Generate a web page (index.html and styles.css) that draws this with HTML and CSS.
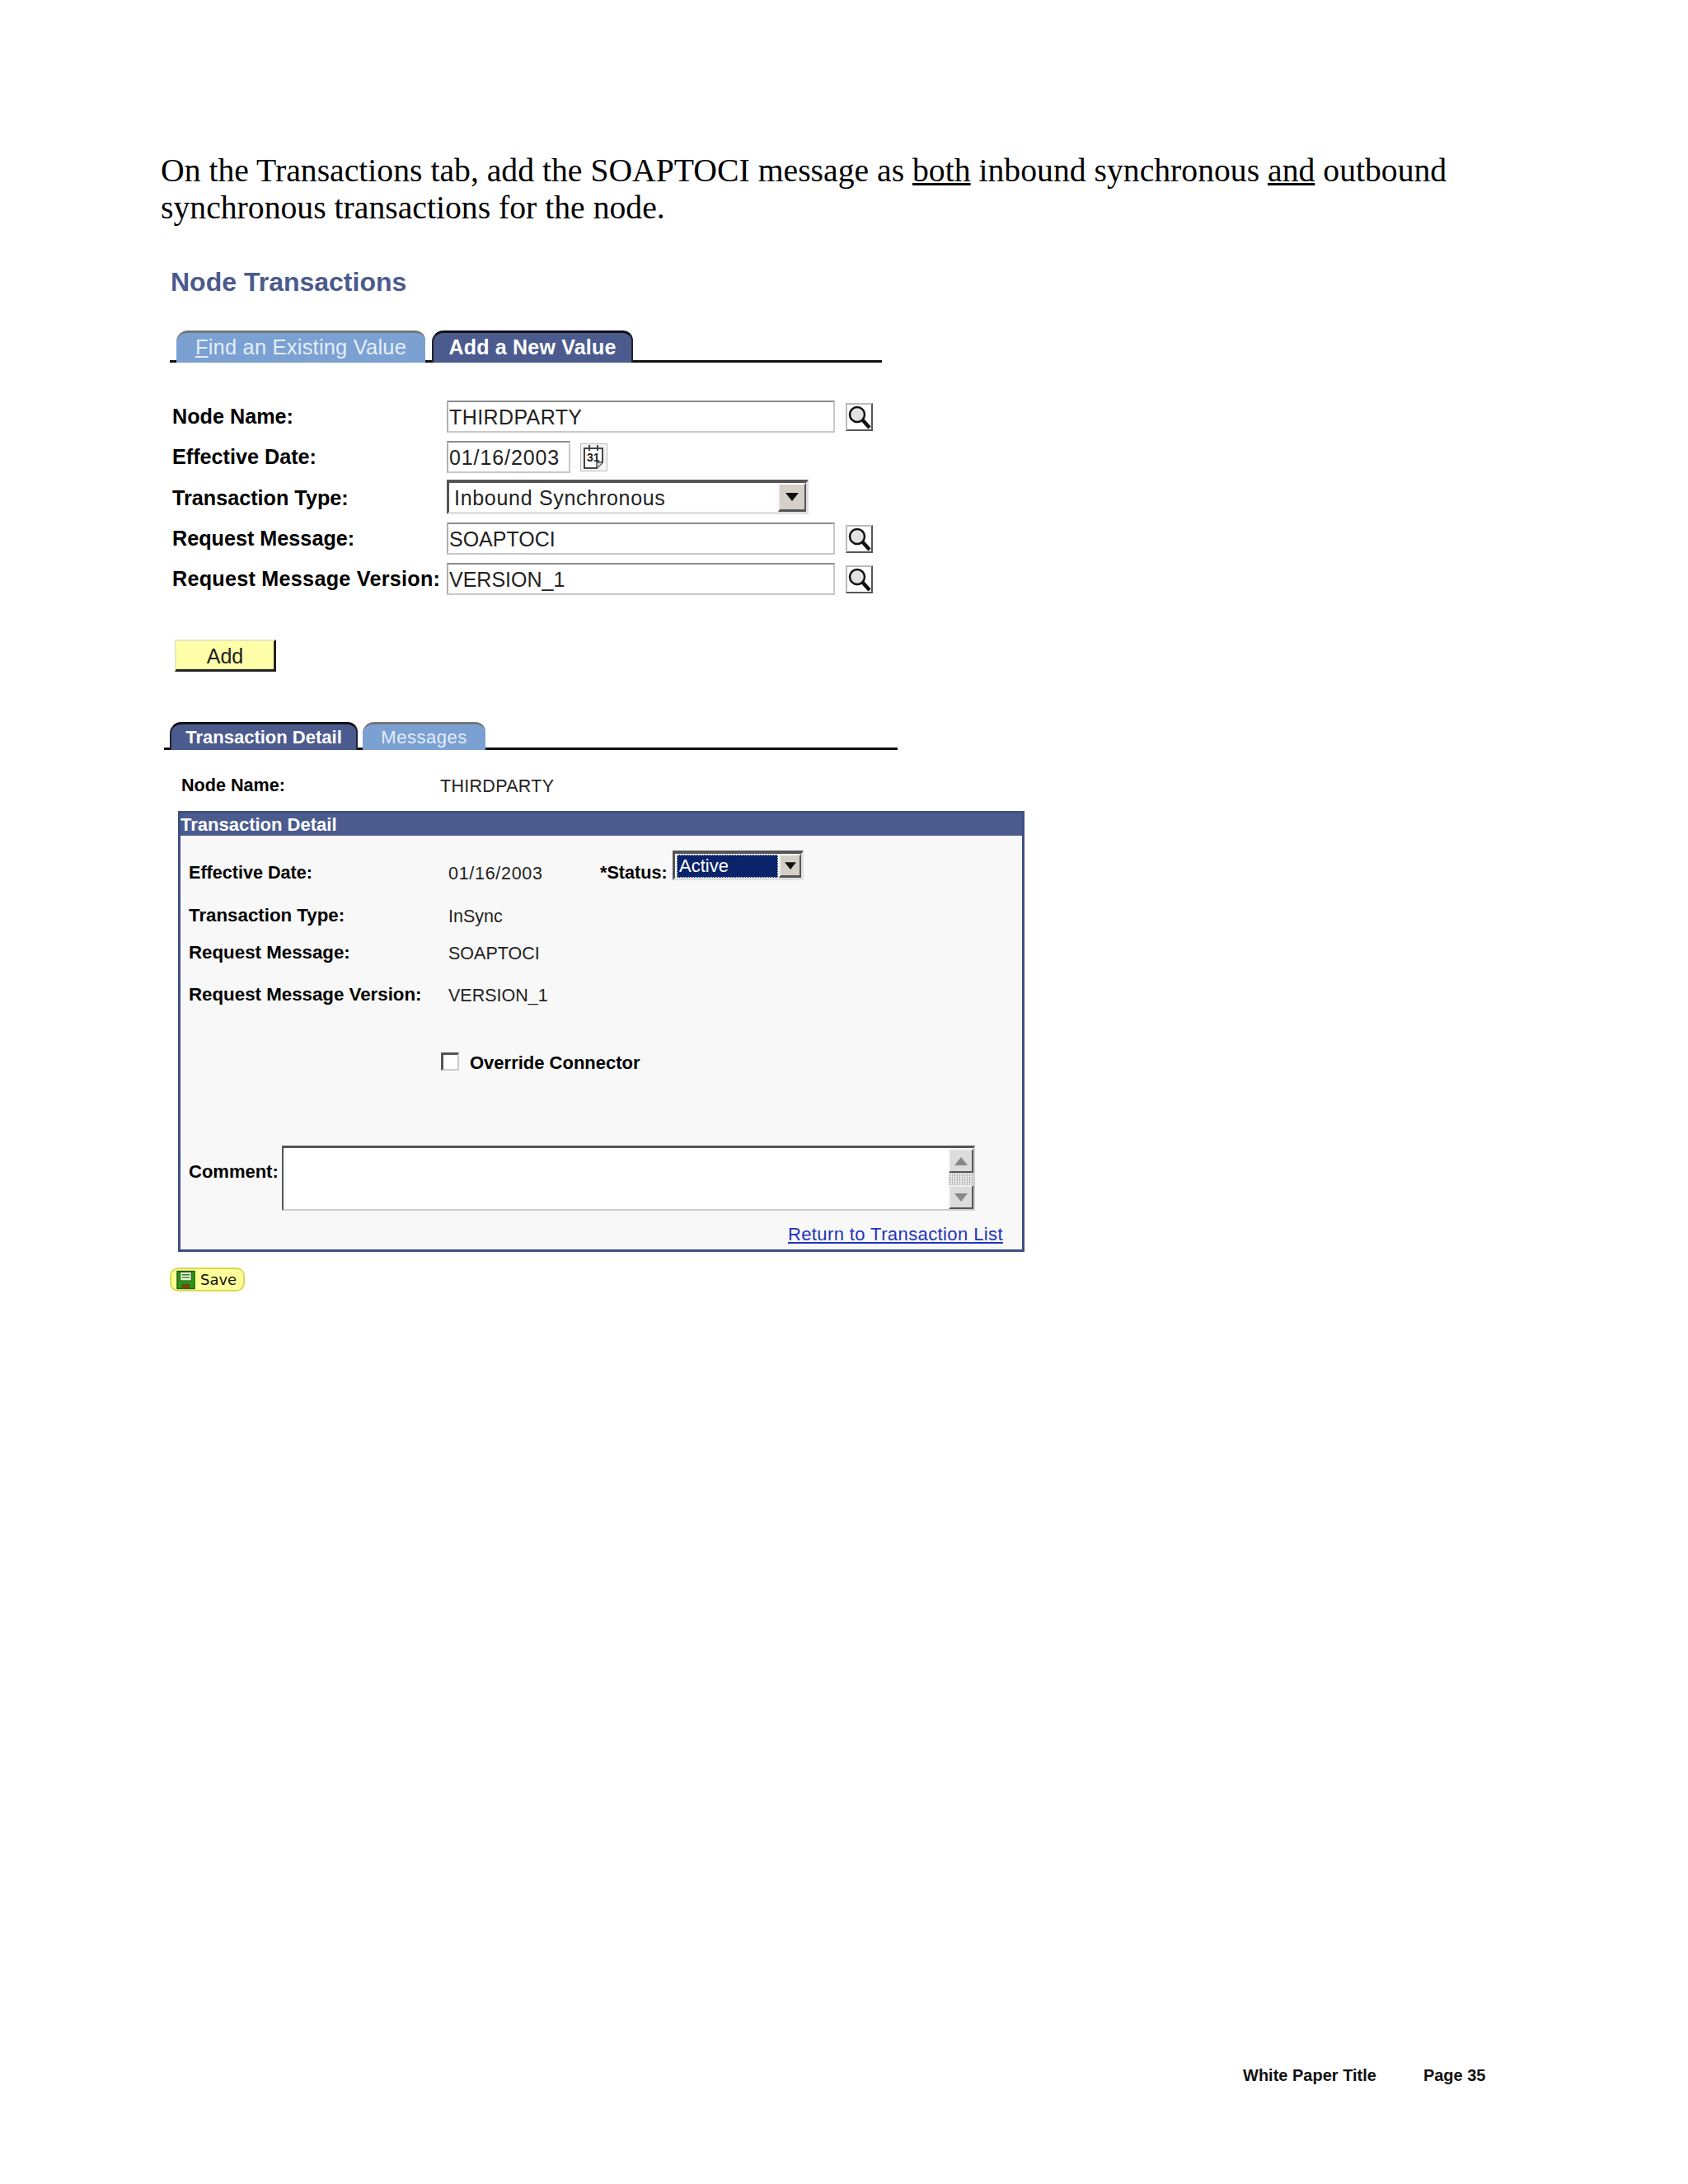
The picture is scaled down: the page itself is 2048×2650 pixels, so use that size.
FILE: index.html
```html
<!DOCTYPE html>
<html lang="en">
<head>
<meta charset="utf-8">
<title>Node Transactions</title>
<link rel="stylesheet" href="styles.css">
</head>
<body>
<main class="page">
  <p class="intro">On the Transactions tab, add the SOAPTOCI message as <u>both</u> inbound synchronous <u>and</u> outbound<br>synchronous transactions for the node.</p>

  <h1 class="title">Node Transactions</h1>

  <nav class="tabs tabs-top">
    <div class="tab tab-off tab-find"><span><u>F</u>ind an Existing Value</span></div>
    <div class="tab tab-on tab-add"><span>Add a New Value</span></div>
  </nav>

  <section class="form">
    <div class="row">
      <div class="label">Node Name:</div>
      <div class="field field-wide field-node">THIRDPARTY</div>
      <div class="iconbtn"><svg viewBox="0 0 33 34" width="33" height="34"><circle cx="14" cy="14" r="9" fill="#e2e2e2" stroke="#111" stroke-width="2.5"/><path d="M20 20 L29 30" stroke="#111" stroke-width="4.500"/></svg></div>
    </div>
    <div class="row">
      <div class="label">Effective Date:</div>
      <div class="field field-date">01/16/2003</div>
      <div class="calbtn"><svg viewBox="0 0 33 34" width="33" height="34"><path d="M5 6H27V23L20 30H5Z" fill="#fff" stroke="#444" stroke-width="2"/><path d="M11 2V9M21 2V9" stroke="#444" stroke-width="2"/><path d="M20 30V23H27" fill="#ddd" stroke="#444" stroke-width="1.500"/><text x="8" y="22" class="caltext">31</text></svg></div>
    </div>
    <div class="row row-select">
      <div class="label">Transaction Type:</div>
      <div class="select select-wide"><span class="select-text">Inbound Synchronous</span><span class="arrowbtn"><svg viewBox="0 0 16 10" width="16" height="10"><path d="M0 0H16L8 10Z" fill="#111"/></svg></span></div>
    </div>
    <div class="row">
      <div class="label">Request Message:</div>
      <div class="field field-wide">SOAPTOCI</div>
      <div class="iconbtn"><svg viewBox="0 0 33 34" width="33" height="34"><circle cx="14" cy="14" r="9" fill="#e2e2e2" stroke="#111" stroke-width="2.5"/><path d="M20 20 L29 30" stroke="#111" stroke-width="4.500"/></svg></div>
    </div>
    <div class="row">
      <div class="label label-long">Request Message Version:</div>
      <div class="field field-wide">VERSION_1</div>
      <div class="iconbtn"><svg viewBox="0 0 33 34" width="33" height="34"><circle cx="14" cy="14" r="9" fill="#e2e2e2" stroke="#111" stroke-width="2.5"/><path d="M20 20 L29 30" stroke="#111" stroke-width="4.500"/></svg></div>
    </div>
    <div class="addbtn">Add</div>
  </section>

  <nav class="tabs tabs-detail">
    <div class="tab tab-on tab-small tab-detail"><span>Transaction Detail</span></div>
    <div class="tab tab-off tab-small tab-msg"><span>Messages</span></div>
  </nav>

  <div class="noderow">
    <div class="dlabel">Node Name:</div>
    <div class="dvalue dvalue-node">THIRDPARTY</div>
  </div>

  <section class="panel">
    <header class="panel-head">Transaction Detail</header>
    <div class="panel-body">
      <div class="drow drow-eff">
        <div class="dlabel">Effective Date:</div>
        <div class="dvalue dvalue-date">01/16/2003</div>
        <div class="dlabel dlabel-status">*Status:</div>
        <div class="select select-status"><span class="select-hi">Active</span><span class="arrowbtn arrowbtn-small"><svg viewBox="0 0 16 10" width="14" height="9"><path d="M0 0H16L8 10Z" fill="#111"/></svg></span></div>
      </div>
      <div class="drow drow-type">
        <div class="dlabel">Transaction Type:</div>
        <div class="dvalue">InSync</div>
      </div>
      <div class="drow drow-req">
        <div class="dlabel">Request Message:</div>
        <div class="dvalue">SOAPTOCI</div>
      </div>
      <div class="drow drow-ver">
        <div class="dlabel">Request Message Version:</div>
        <div class="dvalue">VERSION_1</div>
      </div>
      <div class="drow drow-check">
        <span class="checkbox"></span>
        <div class="dlabel dlabel-auto">Override Connector</div>
      </div>
      <div class="comment">
        <div class="dlabel dlabel-comment">Comment:</div>
        <div class="textarea">
          <div class="scroll">
            <div class="sbtn"><svg viewBox="0 0 16 10" width="16" height="10"><path d="M0 10H16L8 0Z" fill="#888"/></svg></div>
            <div class="strack"></div>
            <div class="sbtn"><svg viewBox="0 0 16 10" width="16" height="10"><path d="M0 0H16L8 10Z" fill="#888"/></svg></div>
          </div>
        </div>
      </div>
      <div class="linkrow"><a class="link" href="#">Return to Transaction List</a></div>
    </div>
  </section>

  <div class="savebtn">
    <svg viewBox="0 0 24 24" width="23" height="24"><path d="M1 1H23V23H1Z" fill="#2c9512" stroke="#1c5c10" stroke-width="1.500"/><path d="M5 2H19V13H5Z" fill="#e8f4d8" stroke="#1c5c10"/><path d="M7 5.500H17M7 9H17" stroke="#2a7a20" stroke-width="1.500"/><path d="M7 17H17V23H7Z" fill="#6a4a14"/></svg>
    <span>Save</span>
  </div>

  <footer class="footer"><span>White Paper Title</span><span>Page 35</span></footer>
</main>
</body>
</html>
```
FILE: styles.css
```css
* { box-sizing: border-box; }
html, body { margin: 0; padding: 0; background: #fff; }
body { font-family: "Liberation Sans", Arial, sans-serif; color: #111; }
.page { width: 2048px; height: 2650px; padding-top: 185px; overflow: hidden; }

.intro {
  margin: 0 0 47px 195px;
  font-family: "Liberation Serif", "Times New Roman", serif;
  font-size: 39.7px;
  line-height: 45px;
  color: #000;
  white-space: nowrap;
}
.title {
  margin: 0 0 39px 207px;
  font-size: 32px;
  line-height: 40px;
  font-weight: 700;
  color: #4b5a8d;
}

.tabs { display: flex; align-items: stretch; border-bottom: 3px solid #111; }
.tabs-top { margin-left: 206px; width: 864px; height: 39px; padding-left: 8px; gap: 8px; }
.tabs-top .tab { padding-bottom: 2px; }
.tabs-detail { margin: 60px 0 0 199px; width: 890px; height: 34px; padding-left: 7px; gap: 6px; }
.tab {
  display: flex; align-items: center; justify-content: center;
  margin-bottom: -3px;
  border-radius: 14px 12px 0 0;
  white-space: nowrap;
}
.tab-on { background: #4c5b8e; color: #fff; font-weight: 700; border-top: 3px solid #111; border-left: 2px solid #223; border-right: 2px solid #223; }
.tab-off { background: #7ba1d2; color: #e4edf8; border-top: 3px solid #777; }
.tab-find { width: 302px; font-size: 25.5px; letter-spacing: .2px; }
.tab-add { width: 244px; font-size: 25px; letter-spacing: .2px; }
.tab-small { font-size: 22px; }
.tab-detail { width: 228px; }
.tab-msg { width: 149px; letter-spacing: .5px; }

.form { margin: 46px 0 0 209px; height: 330px; }
.row { display: flex; align-items: center; height: 39px; margin-bottom: 10px; }
.row-select { height: 42px; margin-top: -2px; }
.row-select .label { padding-top: 2px; }
.label { width: 333px; font-size: 25.2px; font-weight: 700; color: #000; white-space: nowrap; }
.label-long { letter-spacing: .25px; }
.field {
  height: 39px; padding-left: 1px;
  font-size: 25px; line-height: 37px; color: #222;
  background: #fff;
  border: 2px solid #c8c8c8; border-top-color: #8c8c8c; border-left-color: #b0b0b0;
}
.field-wide { width: 471px; }
.field-node { letter-spacing: .4px; }
.field-date { width: 150px; letter-spacing: .9px; }
.iconbtn {
  width: 33px; height: 34px; margin-left: 13px; background: #fff;
  border: 2px solid #555; border-top-color: #bbb; border-left-color: #bbb;
  overflow: hidden;
}
.iconbtn svg { display: block; margin: -2px; }
.calbtn {
  width: 33px; height: 34px; margin-left: 12px; background: #f4f4f4;
  border: 1px solid #bbb; overflow: hidden;
}
.calbtn svg { display: block; margin: -1px; }
.caltext { font-size: 14px; font-weight: 700; font-family: "Liberation Sans", Arial, sans-serif; fill: #222; }
.select {
  display: flex; align-items: center; justify-content: space-between;
  background: #fff;
  border: 3px solid #e0e0e0; border-top: 4px solid #555; border-left: 3px solid #555;
}
.select-wide { width: 439px; height: 42px; }
.select-text { padding: 2px 0 0 6px; font-size: 25px; letter-spacing: .7px; color: #222; }
.arrowbtn {
  display: flex; align-items: center; justify-content: center;
  width: 34px; height: 100%; background: #d4d0c8;
  border-right: 2px solid #555; border-bottom: 3px solid #555;
  border-top: 2px solid #fff; border-left: 2px solid #eee;
}
.arrowbtn-small { width: 27px; }
.addbtn {
  width: 123px; height: 39px; margin: 54px 0 0 3px;
  font-size: 25px; line-height: 36px; text-align: center; color: #222;
  background: #ffffa9;
  border: 2px solid #e8e8c0; border-right: 3px solid #222; border-bottom: 3px solid #222;
}

.noderow { display: flex; height: 26px; margin: 30px 0 18px 220px; }
.dlabel { width: 315px; font-size: 22.3px; line-height: 26px; font-weight: 700; color: #000; white-space: nowrap; }
.dlabel-auto { width: auto; font-size: 22px; }
.dlabel-comment { width: 113px; margin-top: 19px; font-size: 22px; }
.drow-eff .dlabel { font-size: 21.6px; }
.dlabel-status { flex: 0 0 88px; }
.dvalue { font-size: 21.5px; line-height: 26px; margin-top: 1px; color: #222; white-space: nowrap; }
.noderow .dlabel { width: 314px; font-size: 21.6px; }
.dvalue-node { letter-spacing: .3px; }
.dvalue-date { width: 184px; letter-spacing: .7px; }

.panel { margin-left: 216px; width: 1027px; border: 3px solid #3f5085; background: #f8f8f8; }
.panel-head {
  height: 27px;
  font-size: 22px; line-height: 27px; font-weight: 700; color: #fff;
  background: #4c5b8e;
}
.panel-body { padding: 0 23px 5px 10px; }
.drow { display: flex; height: 26px; }
.drow-eff { margin-top: 32px; }
.drow-type { margin-top: 26px; }
.drow-req { margin-top: 19px; }
.drow-ver { margin-top: 25px; }
.drow-check { margin-top: 57px; padding-left: 306px; }
.select-status { width: 159px; height: 36px; margin-top: -14px; }
.select-hi {
  width: 123px; height: 28px; margin-left: 2px; padding-left: 2px;
  font-size: 22px; line-height: 26px; color: #fff;
  background: #0a246a; border: 1px dotted #fff;
}
.checkbox {
  width: 22px; height: 22px; margin-right: 13px; background: #fff;
  border: 2px solid #ccc; border-top: 3px solid #555; border-left: 3px solid #555;
}
.comment { display: flex; height: 79px; margin-top: 87px; }
.textarea {
  display: flex; justify-content: flex-end;
  width: 841px; height: 79px; background: #fff; padding: 1px 0 0;
  border: 2px solid #ccc; border-top: 3px solid #555; border-left: 2px solid #555;
}
.scroll { display: flex; flex-direction: column; width: 30px; height: 73px; }
.sbtn {
  display: flex; align-items: center; justify-content: center;
  flex: none; height: 29px; background: #dcdcdc;
  border: 2px solid #555; border-top-color: #eee; border-left-color: #eee;
}
.strack { flex: 1; background: repeating-conic-gradient(#bbb 0 25%, #f4f4f4 0 50%) 0 0 / 3px 3px; }
.linkrow { display: flex; justify-content: flex-end; margin-top: 16px; height: 26px; }
.link { font-size: 22px; line-height: 26px; letter-spacing: .4px; color: #2233bb; text-decoration: underline; }

.savebtn {
  display: flex; align-items: center; gap: 6px;
  width: 91px; height: 29px; margin: 19px 0 0 206px; padding-left: 6px;
  font-family: "DejaVu Sans", sans-serif; font-size: 18px; color: #111;
  background: #ffff99; border: 2px solid #d8d850; border-radius: 10px;
}
.footer {
  display: flex; gap: 57px;
  margin: 939px 0 0 1508px;
  font-size: 20px; line-height: 24px; font-weight: 700; color: #111;
}
```
